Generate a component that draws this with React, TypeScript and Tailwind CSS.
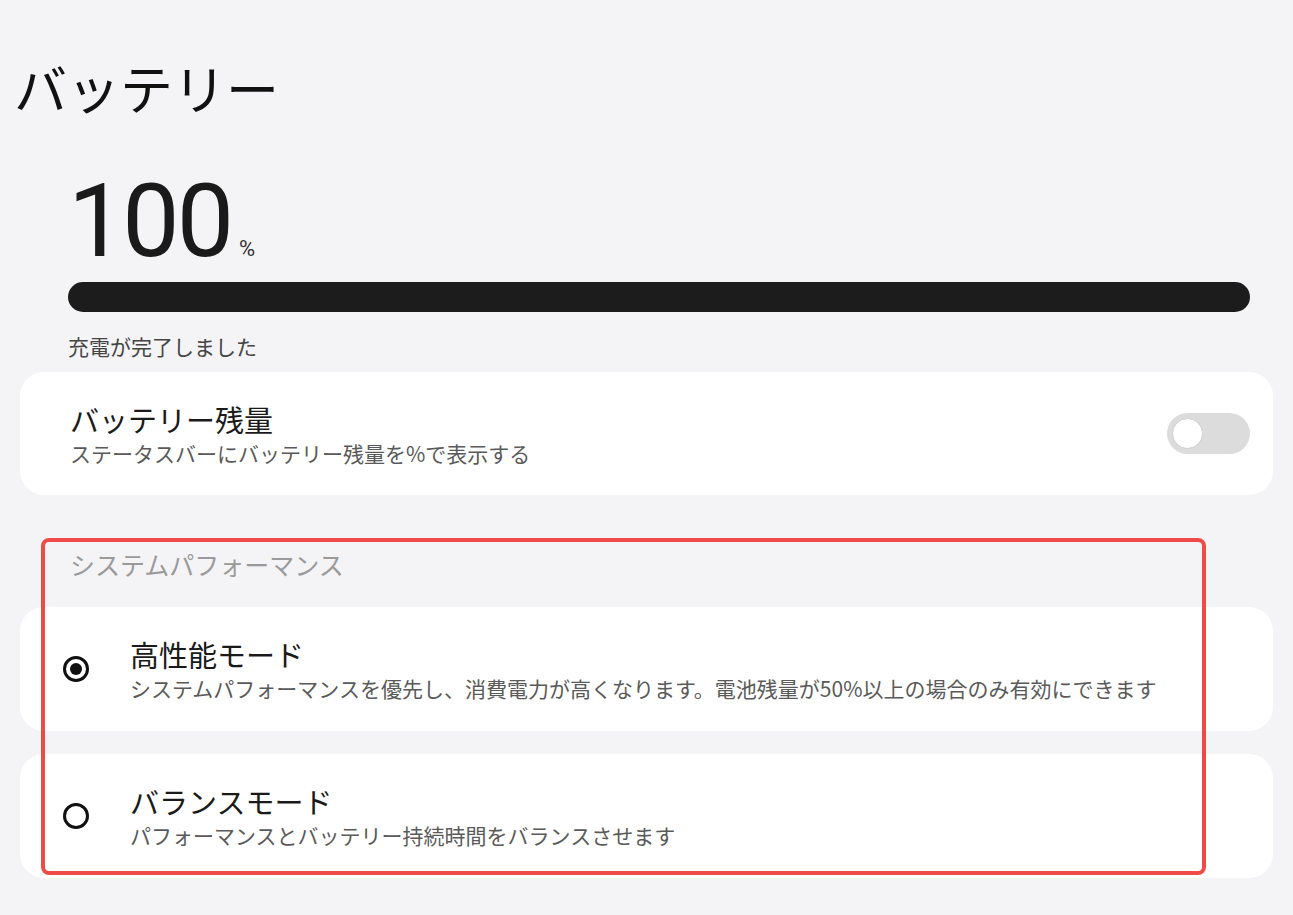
import React from 'react';

const jp = { fontFamily: '"Noto Sans CJK JP", "Noto Sans", sans-serif' };

function Radio({ checked }: { checked: boolean }) {
  return (
    <div className="w-[26px] h-[26px] rounded-full border-[3px] border-[#111] flex items-center justify-center shrink-0">
      {checked && <div className="w-[12px] h-[12px] rounded-full bg-[#111]" />}
    </div>
  );
}

function ModeCard({ title, desc, checked }: { title: string; desc: string; checked: boolean }) {
  return (
    <div className="bg-white rounded-[24px] h-[124px] flex items-center pl-[43px]">
      <Radio checked={checked} />
      <div className="ml-[41px] flex flex-col">
        <div className="text-[29px] leading-[36px] text-[#1a1a1a]">{title}</div>
        <div className="text-[21px] leading-[28px] text-[#5a5a5a] mt-[2px]">{desc}</div>
      </div>
    </div>
  );
}

export default function App() {
  return (
    <div className="min-h-screen w-full bg-[#f4f4f6] overflow-hidden" style={jp}>
      {/* Header */}
      <h1 className="pl-[14px] pt-[56px] text-[53px] leading-[62px] font-normal text-[#111]">バッテリー</h1>

      {/* Level */}
      <div className="pl-[68px] pr-[43px] mt-[60px]">
        <div className="flex items-end">
          <span className="text-[102px] leading-[86px] tracking-[-3px] text-[#1a1a1a]" style={{ fontFamily: 'Roboto, sans-serif' }}>
            100
          </span>
          <span className="text-[22px] leading-[22px] text-[#333] ml-[8px] mb-[4px]" style={{ fontFamily: 'Roboto, sans-serif' }}>
            %
          </span>
        </div>
        <div className="mt-[18px] h-[30px] w-full rounded-full bg-[#1c1c1c]" />
        <div className="mt-[20px] text-[21px] leading-[28px] text-[#444]">充電が完了しました</div>
      </div>

      {/* Percentage toggle */}
      <div className="mx-[20px] mt-[12px] bg-white rounded-[24px] h-[123px] flex items-center justify-between pl-[50px] pr-[23px]">
        <div className="flex flex-col">
          <div className="text-[29px] leading-[36px] text-[#1a1a1a]">バッテリー残量</div>
          <div className="text-[21px] leading-[28px] text-[#5a5a5a] mt-[2px]">ステータスバーにバッテリー残量を%で表示する</div>
        </div>
        <div className="w-[83px] h-[41px] rounded-full bg-[#dcdcdc] flex items-center pl-[5px]">
          <div className="w-[31px] h-[31px] rounded-full bg-white border border-[#d0d0d0]" />
        </div>
      </div>

      {/* System performance */}
      <div className="relative mt-[43px]">
        <div className="pl-[70px] text-[25px] leading-[32px] text-[#9a9a9a] pt-[10px]">システムパフォーマンス</div>
        <div className="mx-[20px] mt-[27px] flex flex-col gap-[23px]">
          <ModeCard
            checked
            title="高性能モード"
            desc="システムパフォーマンスを優先し、消費電力が高くなります。電池残量が50%以上の場合のみ有効にできます"
          />
          <ModeCard checked={false} title="バランスモード" desc="パフォーマンスとバッテリー持続時間をバランスさせます" />
        </div>
        <div className="absolute left-[41px] top-0 w-[1165px] h-[337px] border-[4px] border-[#ef4b46] rounded-[8px] pointer-events-none" />
      </div>
    </div>
  );
}
